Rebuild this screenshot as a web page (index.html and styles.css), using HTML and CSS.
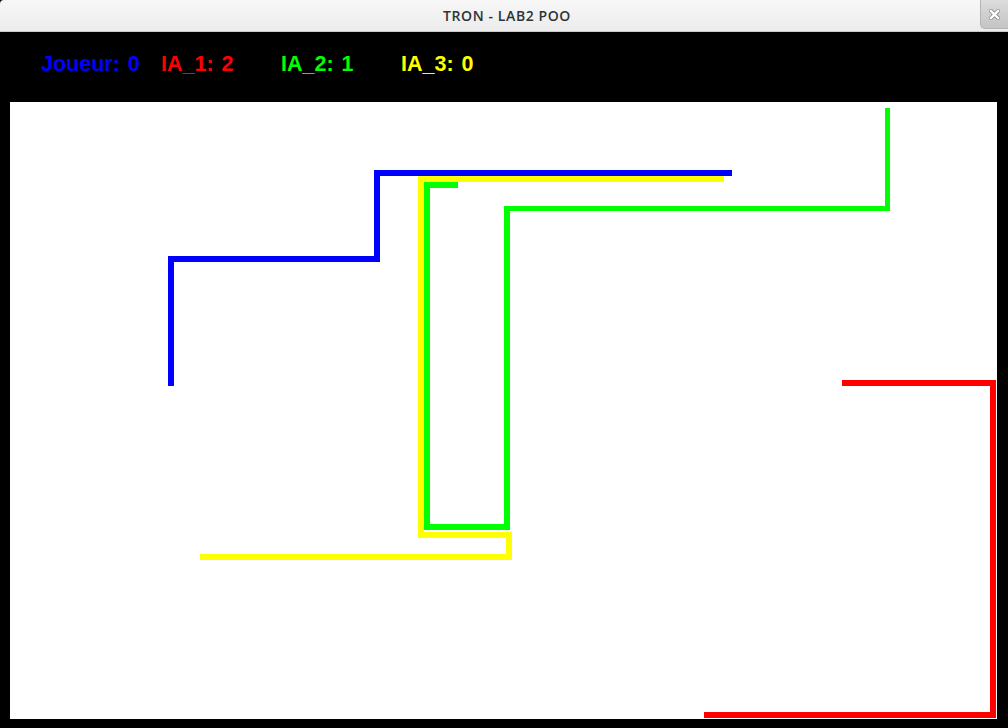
FILE: index.html
```html
<!DOCTYPE html>
<html lang="fr">
<head>
<meta charset="utf-8">
<title>TRON - LAB2 POO</title>
<link rel="stylesheet" href="styles.css">
</head>
<body>
<div class="window">
  <header class="titlebar">
    <span class="title">TRON - LAB2 POO</span>
    <button class="close" aria-label="Fermer">
      <svg width="11" height="11" viewBox="0 0 11 11"><path d="M2 2 L9 9 M9 2 L2 9" stroke="#8a8a8a" stroke-width="4" stroke-linecap="square"/><path d="M2 2 L9 9 M9 2 L2 9" stroke="#ffffff" stroke-width="2.4" stroke-linecap="square"/></svg>
    </button>
  </header>
  <main class="game">
    <div class="scores">
      <span class="score blue">Joueur: 0</span>
      <span class="score red">IA_1: 2</span>
      <span class="score green">IA_2: 1</span>
      <span class="score yellow">IA_3: 0</span>
    </div>
    <div class="arena">
      <svg class="board" width="987" height="617" viewBox="0 0 987 617">
        <g fill="#ffff00">
          <rect x="408" y="74" width="306" height="6"/>
          <rect x="408" y="74" width="6" height="362"/>
          <rect x="408" y="430" width="94" height="6"/>
          <rect x="496" y="430" width="6" height="28"/>
          <rect x="190" y="452" width="312" height="6"/>
        </g>
        <g fill="#00ff00">
          <rect x="414" y="80" width="34" height="6"/>
          <rect x="414" y="80" width="6" height="348"/>
          <rect x="414" y="422" width="86" height="6"/>
          <rect x="494" y="104" width="6" height="324"/>
          <rect x="494" y="104" width="386" height="5"/>
          <rect x="875" y="6" width="5" height="103"/>
        </g>
        <g fill="#0000ff">
          <rect x="158" y="154" width="6" height="130"/>
          <rect x="158" y="154" width="212" height="6"/>
          <rect x="364" y="68" width="6" height="92"/>
          <rect x="364" y="68" width="358" height="6"/>
        </g>
        <g fill="#ff0000">
          <rect x="832" y="278" width="154" height="6"/>
          <rect x="980" y="278" width="6" height="338"/>
          <rect x="694" y="610" width="292" height="6"/>
        </g>
      </svg>
    </div>
  </main>
</div>
</body>
</html>
```

FILE: styles.css
```css
html, body {
  margin: 0;
  padding: 0;
  background: #000;
}
.window {
  width: 1008px;
  height: 728px;
  display: flex;
  flex-direction: column;
  background: #000;
  overflow: hidden;
}
.titlebar {
  height: 32px;
  box-sizing: border-box;
  position: relative;
  display: flex;
  align-items: center;
  justify-content: center;
  background: linear-gradient(#f7f7f7, #ececec);
  border-bottom: 1px solid #c9c9c9;
  border-radius: 4px 4px 0 0;
}
.title {
  font-family: "Open Sans", "DejaVu Sans", sans-serif;
  font-size: 14px;
  font-weight: 600;
  color: #2e3436;
  padding-left: 6px;
  letter-spacing: 0.6px;
}
.close {
  position: absolute;
  top: 0;
  right: 0;
  width: 28px;
  height: 29px;
  padding: 0;
  border: 1px solid #b4b4b4;
  border-top: none;
  border-right: none;
  border-radius: 0 0 0 5px;
  background: linear-gradient(#dcdcdc, #c4c4c4);
  display: flex;
  align-items: center;
  justify-content: center;
}
.game {
  flex: 1;
  display: flex;
  flex-direction: column;
}
.scores {
  height: 70px;
  box-sizing: border-box;
  padding: 20px 0 0 41px;
  display: flex;
}
.score {
  width: 120px;
  font-family: "Liberation Sans", Arial, sans-serif;
  font-weight: bold;
  font-size: 21.5px;
  line-height: 24px;
  word-spacing: 2px;
}
.blue { color: #0000ff; }
.red { color: #ff0000; }
.green { color: #00ff00; }
.yellow { color: #ffff00; }
.arena {
  padding-left: 10px;
}
.board {
  display: block;
  background: #ffffff;
}
```
